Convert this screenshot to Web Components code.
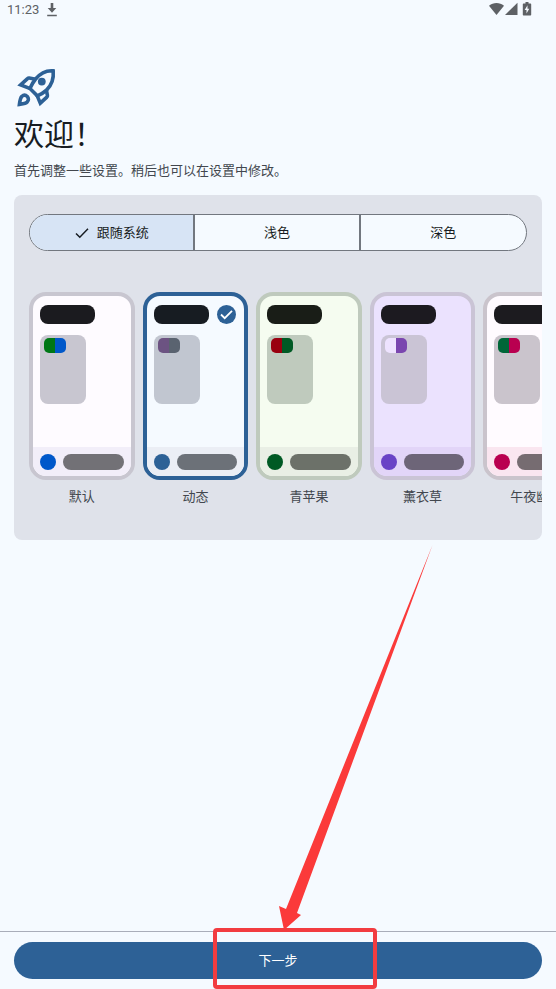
<!DOCTYPE html>
<html lang="zh-CN">
<head>
<meta charset="utf-8">
<meta name="viewport" content="width=device-width, initial-scale=1">
<title>欢迎</title>
<style>
body {
    margin: 0;
    background-color: #f5faff;
    color: #171c22;
    font-family: Roboto, "Noto Sans CJK SC", sans-serif;
    font-size: 13px;
    line-height: 20px;
}
</style>
</head>
<body>
<welcome-page>
    <status-bar slot="status" time="11:23"></status-bar>
    <page-header slot="header">
        <span slot="title">欢迎！</span>
        <span slot="subtitle">首先调整一些设置。稍后也可以在设置中修改。</span>
    </page-header>
    <theme-panel>
        <mode-switch slot="mode" options="跟随系统,浅色,深色"></mode-switch>
        <theme-card style="--bg:#fefbff;--ink:#1b1b1f;--line:#c8c6d0;--second:#007716;--main:#0058ca;--nav:#f2eef9;--bar:#727176">默认</theme-card>
        <theme-card selected style="--bg:#f5faff;--ink:#171c22;--line:#c1c6d0;--second:#6c5382;--third:#5a6370;--main:#2d6196;--nav:#ebeef5;--bar:#6c7178">动态</theme-card>
        <theme-card style="--bg:#f5fcf0;--ink:#191d17;--line:#bfcabd;--second:#99000f;--main:#005a24;--nav:#e9efe5;--bar:#6c7169">青苹果</theme-card>
        <theme-card style="--bg:#ebe2fe;--ink:#1c1a20;--line:#cac4d5;--second:#eee3ff;--third:#7a46af;--main:#6943c6;--nav:#e2d5f8;--bar:#6d6578">薰衣草</theme-card>
        <theme-card style="--bg:#fffbff;--ink:#1c1b1f;--line:#cac4cc;--second:#006638;--main:#b90050;--nav:#fae6f0;--bar:#766c71">午夜幽暮</theme-card>
    </theme-panel>
    <bottom-bar slot="footer">下一步</bottom-bar>
</welcome-page>

<script>
function makeTemplate(html) {
    const template = document.createElement('template');
    template.innerHTML = html;
    return template;
}

class BaseElement extends HTMLElement {
    constructor() {
        super();
        this._shadowRoot = this.attachShadow({ mode: 'open' });
        this._shadowRoot.appendChild(this.constructor.template.content.cloneNode(true));
    }
}

class WelcomePage extends BaseElement {}
WelcomePage.template = makeTemplate(`
<style>
:host {
    display: flex;
    flex-direction: column;
    min-height: 100vh;
}

main {
    flex: 1;
    padding: 46px 14px 16px;
}
</style>
<slot name="status"></slot>
<main>
    <slot name="header"></slot>
    <slot></slot>
</main>
<slot name="footer"></slot>
`);

class StatusBar extends BaseElement {
    connectedCallback() {
        this._shadowRoot.querySelector('.time').textContent = this.getAttribute('time');
    }
}
StatusBar.template = makeTemplate(`
<style>
:host {
    display: flex;
    align-items: center;
    justify-content: space-between;
    padding: 0 24px 0 7px;
    color: #5e6165;
}

div {
    display: flex;
    align-items: center;
}

.left {
    gap: 7px;
}

.right {
    margin-bottom: 2px;
}

svg {
    display: block;
    fill: currentColor;
}
</style>
<div class="left">
    <span class="time"></span>
    <svg width="12" height="14" viewBox="0 0 12 14" aria-hidden="true">
        <path d="M4.700 0h2.600v5h3L6 9.800 1.700 5h3zM1.200 11.800h9.600v1.400H1.200z"/>
    </svg>
</div>
<div class="right">
    <svg width="43" height="14" viewBox="0 0 43 14" aria-hidden="true">
        <path d="M0 3.800C4.400.2 10.600.2 15 3.800L7.500 13z"/>
        <path d="M28.500.8V13H16z"/>
        <path fill-rule="evenodd" d="M36.500 0h3v1.400h1.700c.6 0 1 .4 1 1v10c0 .6-.4 1-1 1h-6.400c-.6 0-1-.4-1-1v-10c0-.6.4-1 1-1h1.700zm2 3.200-2.800 4.700h1.800v3.600l2.800-4.800h-1.800z"/>
    </svg>
</div>
`);

class PageHeader extends BaseElement {}
PageHeader.template = makeTemplate(`
<style>
:host {
    display: block;
}

svg {
    display: block;
}

h1 {
    margin: 4px 0 0;
    font-size: 30px;
    font-weight: 400;
    line-height: 40px;
}

p {
    margin: 6px 0 14px;
    color: #42474e;
}
</style>
<svg width="45" height="45" viewBox="14 66 45 45" fill="none" stroke="#2d6196" stroke-width="3.6" aria-hidden="true">
    <path d="M53.200 70.800C46.500 70.200 40.500 73 35.600 79c-2.600 3.200-4.400 6.500-5.700 9.400l7.400 7.400c3.200-1.400 6.600-3.200 9.200-5.700 5.300-5.200 7.400-11.800 6.700-19.300z"/>
    <path d="M35.600 79.200l-6.400-1.200c-.7-.1-1.200.1-1.700.6L20.600 84.800l9 3.600M46.400 90.200l1 5.200c.1.700-.1 1.200-.6 1.700l-6.500 6-3.500-8.200"/>
    <path d="M19.400 104.400c.4-3 .8-6.200 2.300-7.900 1.700-1.500 4-1.500 5.600 0 1.500 1.600 1.500 4-.1 5.600-1.600 1.700-4.800 1.900-7.800 2.300z"/>
    <circle cx="41.800" cy="81.600" r="3.900" fill="#2d6196" stroke="none"/>
</svg>
<h1><slot name="title"></slot></h1>
<p><slot name="subtitle"></slot></p>
`);

class ModeSwitch extends BaseElement {
    connectedCallback() {
        const group = this._shadowRoot.querySelector('.group');
        this.getAttribute('options').split(',').forEach((text, i) => {
            const item = ModeSwitch.item.content.cloneNode(true);
            item.querySelector('input').checked = i === 0;
            item.querySelector('.text').textContent = text;
            group.appendChild(item);
        });
    }
}
ModeSwitch.item = makeTemplate(`
<label>
    <input type="radio" name="mode">
    <svg width="14" height="12" viewBox="0 0 14 12" aria-hidden="true">
        <path d="M1 6.500 4.800 10.300 13 1.800" fill="none" stroke="currentColor" stroke-width="1.500"/>
    </svg>
    <span class="text"></span>
</label>
`);
ModeSwitch.template = makeTemplate(`
<style>
:host {
    display: block;
}

.group {
    display: grid;
    grid-template-columns: repeat(3, 1fr);
    height: 37px;
    box-sizing: border-box;
    border: 1px solid #72777f;
    border-radius: 19px;
    background-color: #f5faff;
    overflow: hidden;
}

label {
    display: flex;
    align-items: center;
    justify-content: center;
    gap: 8px;
    cursor: pointer;
}

label:not(:last-child) {
    border-right: 2px solid #72777f;
}

label:has(input:checked) {
    background-color: #d7e4f5;
}

label:has(input:focus-visible) {
    text-decoration: underline;
}

input {
    appearance: none;
    position: absolute;
    margin: 0;
}

svg {
    display: none;
}

input:checked + svg {
    display: block;
}
</style>
<div class="group" role="radiogroup" aria-label="主题模式"></div>
`);

class ThemePanel extends BaseElement {
    connectedCallback() {
        this.addEventListener('theme-pick', (e) => {
            this.querySelectorAll('theme-card').forEach((card) => {
                card.toggleAttribute('selected', card === e.target);
            });
        });
    }
}
ThemePanel.template = makeTemplate(`
<style>
:host {
    display: block;
    padding: 19px 0 33px;
    border-radius: 8px;
    background-color: #dfe2ea;
    overflow: hidden;
}

.mode {
    padding: 0 15px;
}

.cards {
    display: flex;
    gap: 8px;
    margin-top: 41px;
    overflow-x: auto;
    scrollbar-width: none;
}

::slotted(theme-card) {
    flex: 0 0 20%;
}

::slotted(theme-card:first-of-type) {
    margin-left: 15px;
}
</style>
<div class="mode"><slot name="mode"></slot></div>
<div class="cards"><slot></slot></div>
`);

class ThemeCard extends BaseElement {
    static get observedAttributes() {
        return ['selected'];
    }

    connectedCallback() {
        this._shadowRoot.querySelector('button').addEventListener('click', () => {
            this.dispatchEvent(new CustomEvent('theme-pick', { bubbles: true }));
        });
    }

    attributeChangedCallback() {
        this._shadowRoot.querySelector('button').setAttribute('aria-pressed', this.hasAttribute('selected'));
    }
}
ThemeCard.template = makeTemplate(`
<style>
:host {
    display: block;
}

button {
    display: block;
    width: 100%;
    padding: 0;
    border: 0;
    background: none;
    color: #42474e;
    font: inherit;
    cursor: pointer;
}

.phone {
    display: flex;
    flex-direction: column;
    height: 188px;
    box-sizing: border-box;
    border: 4px solid var(--line);
    border-radius: 17px;
    background-color: var(--bg);
    overflow: hidden;
}

:host([selected]) .phone {
    border-color: var(--main);
}

.top {
    display: flex;
    align-items: center;
    justify-content: space-between;
    padding: 9px 8px 0 7px;
}

.title {
    width: 55px;
    height: 19px;
    border-radius: 8px;
    background-color: var(--ink);
}

.check {
    display: none;
}

:host([selected]) .check {
    display: block;
}

.cover {
    width: 46px;
    height: 69px;
    box-sizing: border-box;
    margin: 11px 0 0 7px;
    padding: 3px 4px;
    border-radius: 8px;
    background-color: var(--line);
}

.badge {
    width: 22px;
    height: 15px;
    border-radius: 5px;
    background: linear-gradient(90deg, var(--second) 50%, var(--third, var(--main)) 50%);
}

.nav {
    display: flex;
    align-items: center;
    gap: 7px;
    height: 29px;
    margin-top: auto;
    padding: 0 7px;
    background-color: var(--nav);
}

.dot {
    width: 16px;
    height: 16px;
    border-radius: 50%;
    background-color: var(--main);
}

.bar {
    flex: 1;
    height: 16px;
    border-radius: 8px;
    background-color: var(--bar);
}

.name {
    display: block;
    margin-top: 7px;
    white-space: nowrap;
}
</style>
<button type="button" aria-pressed="false">
    <div class="phone">
        <div class="top">
            <div class="title"></div>
            <svg class="check" width="19" height="19" viewBox="0 0 19 19" aria-hidden="true">
                <circle cx="9.500" cy="9.500" r="9.500" fill="#2d6196"/>
                <path d="M4 9.500 7.700 13.200 15 5.800" fill="none" stroke="#fff" stroke-width="1.800"/>
            </svg>
        </div>
        <div class="cover"><div class="badge"></div></div>
        <div class="nav"><div class="dot"></div><div class="bar"></div></div>
    </div>
    <span class="name"><slot></slot></span>
</button>
`);

class BottomBar extends BaseElement {}
BottomBar.template = makeTemplate(`
<style>
:host {
    display: block;
    position: relative;
    padding: 10px 14px;
    border-top: 1px solid #a9adb9;
}

button {
    display: block;
    width: 100%;
    height: 37px;
    border: 0;
    border-radius: 19px;
    background-color: #2d6196;
    color: #fff;
    font: inherit;
    cursor: pointer;
}

/* red marker drawn over the page, pointing at the button */
.marker {
    position: absolute;
    left: calc(50% - 65px);
    bottom: 0;
    pointer-events: none;
}
</style>
<button type="button"><slot></slot></button>
<svg class="marker" width="220" height="444" viewBox="213 545 220 444" aria-hidden="true">
    <path fill="#fb3a3a" d="M432.500 545 297 913l4 2-17 15-5-24 7 3z"/>
    <rect x="215" y="930" width="160" height="57" rx="2" fill="none" stroke="#f23c40" stroke-width="4"/>
</svg>
`);

customElements.define('welcome-page', WelcomePage);
customElements.define('status-bar', StatusBar);
customElements.define('page-header', PageHeader);
customElements.define('mode-switch', ModeSwitch);
customElements.define('theme-panel', ThemePanel);
customElements.define('theme-card', ThemeCard);
customElements.define('bottom-bar', BottomBar);
</script>
</body>
</html>
